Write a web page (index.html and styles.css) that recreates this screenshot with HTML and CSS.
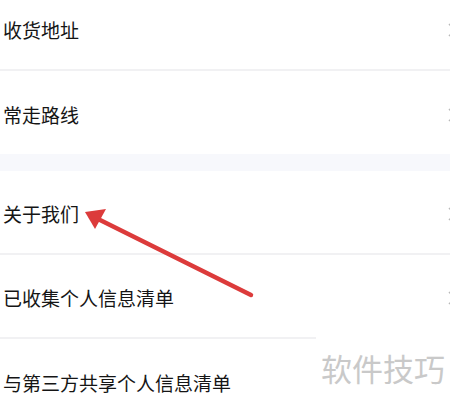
FILE: index.html
```html
<!DOCTYPE html>
<html lang="zh">
<head>
<meta charset="utf-8">
<link rel="stylesheet" href="styles.css">
</head>
<body>
<div class="page">
  <div class="list first">
    <div class="row line"><span class="label">收货地址</span><svg class="chev" viewBox="0 0 8 14"><path d="M1 1 L7 7 L1 13" /></svg></div>
    <div class="row"><span class="label">常走路线</span><svg class="chev" viewBox="0 0 8 14"><path d="M1 1 L7 7 L1 13" /></svg></div>
  </div>
  <div class="band"></div>
  <div class="list">
    <div class="row line"><span class="label">关于我们</span><svg class="chev" viewBox="0 0 8 14"><path d="M1 1 L7 7 L1 13" /></svg></div>
    <div class="row line"><span class="label">已收集个人信息清单</span><svg class="chev" viewBox="0 0 8 14"><path d="M1 1 L7 7 L1 13" /></svg></div>
    <div class="row"><span class="label">与第三方共享个人信息清单</span><svg class="chev" viewBox="0 0 8 14"><path d="M1 1 L7 7 L1 13" /></svg></div>
  </div>

  <svg class="arrow" width="450" height="402" viewBox="0 0 450 402">
    <line x1="251" y1="295" x2="98" y2="219" stroke="#dc3b3b" stroke-width="4.5" stroke-linecap="round"/>
    <polygon points="85,212 106,209 95,229" fill="#dc3b3b"/>
  </svg>

  <div class="watermark">软件技巧</div>
</div>
</body>
</html>
```
FILE: styles.css
```css
html, body {
  margin: 0;
  padding: 0;
  background: #ffffff;
  overflow: hidden;
}
.page {
  position: relative;
  width: 450px;
  height: 402px;
  overflow: hidden;
  font-family: "Noto Sans CJK SC", "Noto Sans", sans-serif;
}
.list {
  display: flex;
  flex-direction: column;
}
.list.first {
  margin-top: -13px;
}
.row {
  display: flex;
  align-items: center;
  height: 83px;
  box-sizing: border-box;
  padding-top: 4px;
  padding-left: 3px;
  background: #ffffff;
}
.row.line {
  height: 84px;
  padding-top: 3px;
  border-bottom: 2px solid #f1f1f3;
}
.label {
  font-size: 19px;
  color: #151515;
  line-height: 1;
}
.chev {
  margin-left: auto;
  margin-right: -6px;
  width: 8px;
  height: 14px;
  fill: none;
  stroke: #b9b9b9;
  stroke-width: 1.5;
}
.band {
  height: 17px;
  background: #f7f8fc;
}
.arrow {
  position: absolute;
  left: 0;
  top: 0;
}
.watermark {
  position: absolute;
  left: 316px;
  top: 332px;
  width: 134px;
  height: 70px;
  background: #ffffff;
  color: #c9c9c9;
  font-size: 31px;
  line-height: 1;
  padding-top: 20px;
  padding-left: 5px;
  box-sizing: border-box;
}
```
